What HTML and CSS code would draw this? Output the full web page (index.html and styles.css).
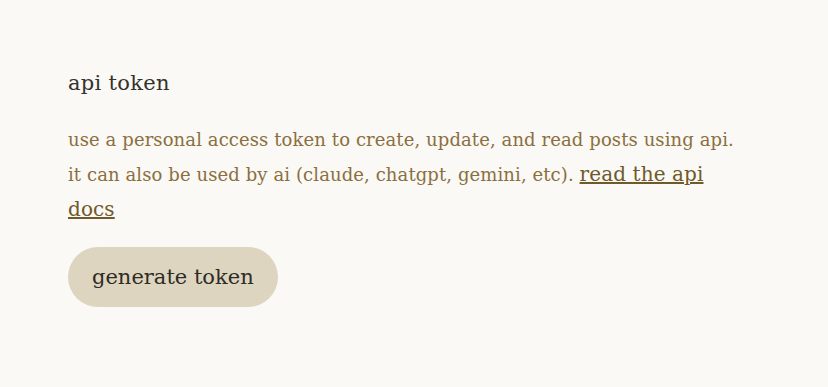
FILE: index.html
```html
<!DOCTYPE html>
<html lang="en">
<head>
    <meta charset="UTF-8">
    <meta name="viewport" content="width=device-width, initial-scale=1.0">
    <title>API Token</title>
    <link rel="stylesheet" href="styles.css">
</head>
<body>
    <!-- api token settings -->
    <div class="section">
        <h2 class="section-title">api token</h2>
        <p class="section-text">
            use a personal access token to create, update, and read posts using api.
            it can also be used by ai (claude, chatgpt, gemini, etc).
            <a href="#" class="docs-link">read the api docs</a>
        </p>
        <button class="token-btn">generate token</button>
    </div>
</body>
</html>
```

FILE: styles.css
```css
/* Main Styles */
body {
    font-family: "DejaVu Serif", serif;
    margin: 0;
    background-color: #faf9f6;
}
.section {
    max-width: 692px;
    padding: 68px 68px 0;
}
.section-title {
    font-size: 21px;
    font-weight: normal;
    letter-spacing: 0.3px;
    color: #34322a;
    margin: 0 0 24px;
    line-height: 30px;
}
.section-text {
    max-width: 670px;
    font-size: 18px;
    letter-spacing: 0.1px;
    line-height: 35px;
    color: #8b6f3e;
    margin: 0 0 20px;
}
.docs-link {
    font-size: 20px;
    line-height: 1;
    color: #6e5a2a;
}

/* Button Styles */
.token-btn {
    font-family: inherit;
    font-size: 21px;
    color: #2e2c25;
    background-color: #ddd5bf;
    border: none;
    border-radius: 30px;
    height: 60px;
    padding: 0 24px;
    cursor: pointer;
}
```
